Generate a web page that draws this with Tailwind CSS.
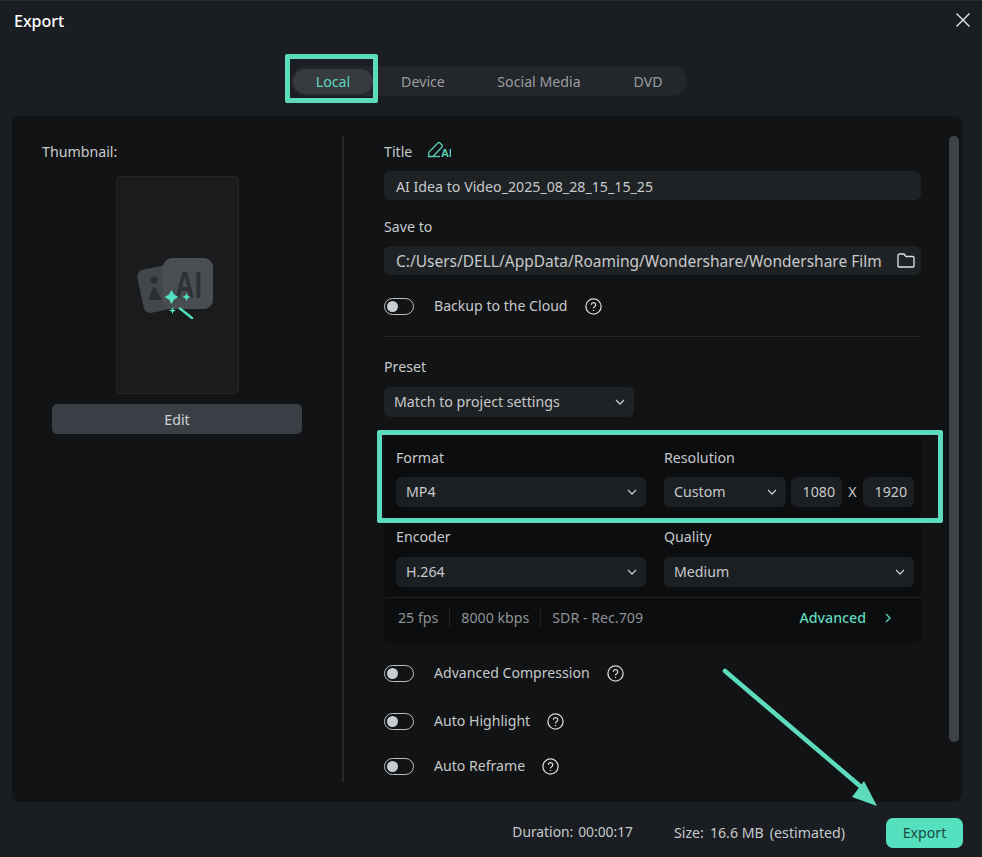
<!DOCTYPE html>
<html lang="en">
<head>
  <meta charset="UTF-8" />
  <title>Export</title>
  <script src="https://cdn.jsdelivr.net/npm/@tailwindcss/browser@4"></script>
</head>
<body class="bg-[#1a1d21] font-['Noto_Sans',sans-serif] text-[14.2px] text-[#c6c9cb]">
  <div class="relative w-[982px] h-[857px] overflow-hidden flex flex-col border-t border-[#2a2d33]">

    <!-- header -->
    <div class="h-[41px] pl-[14px] pr-[11px] pb-[3px] flex items-center justify-between shrink-0">
      <span class="text-[16px] font-medium text-white pt-[2px]">Export</span>
      <svg class="w-[16px] h-[16px]" viewBox="0 0 16 16" fill="none" stroke="#e6e8ea" stroke-width="1.4"><path d="M1.5 1.5l13 13M14.5 1.5l-13 13"/></svg>
    </div>

    <!-- tabs -->
    <div class="h-[74px] pt-[24px] flex justify-center shrink-0">
      <div class="w-[396px] h-[30px] ml-[-4px] rounded-full bg-[#23262a] flex items-center text-[#9a9da0]">
        <div class="w-[80px] h-[25px] ml-[2px] pt-[2px] rounded-full bg-[#373b40] flex items-center justify-center text-[#5fd8bc]">Local</div>
        <div class="w-[100px] pt-[2px] text-center">Device</div>
        <div class="w-[132px] pt-[2px] text-center">Social Media</div>
        <div class="w-[82px] pl-[4px] pt-[2px] text-center">DVD</div>
      </div>
    </div>

    <!-- panel -->
    <div class="mx-[12px] w-[950px] h-[686px] rounded-[8px] bg-[#111314] flex shrink-0">
      <div class="w-[330px] pt-[26px] flex flex-col items-center shrink-0">
        <div class="w-full pl-[30px] leading-[20px] text-[#c9cbcd]">Thumbnail:</div>
        <div class="mt-[14px] w-[123px] h-[218px] rounded-[4px] bg-[#1a1b1c] border border-[#222426] flex items-center justify-center">
          <svg class="w-[80px] h-[70px] mt-[-2px]" viewBox="0 0 80 70">
            <rect x="3" y="17" width="46" height="44" rx="7" fill="#43474b" transform="rotate(-12 26 39)"/>
            <circle cx="17" cy="31" r="3.5" fill="#2c2f32"/>
            <path d="M11 51l6-14 8 14z" fill="#2c2f32"/>
            <rect x="26" y="9" width="50" height="51" rx="9" fill="#4a4e52"/>
            <text x="38" y="49" font-size="37" font-weight="700" font-family="Liberation Sans" fill="#2e3235" textLength="27" lengthAdjust="spacingAndGlyphs">AI</text>
            <path d="M34.500 41l2.500 4.500 4.500 2.500-4.500 2.500-2.500 4.500-2.500-4.500-4.500-2.500 4.500-2.500z" fill="#4fe3c4"/>
            <path d="M49.500 44l1.200 2.800 2.800 1.200-2.800 1.200-1.200 2.800-1.200-2.800-2.800-1.200 2.800-1.200z" fill="#4fe3c4"/>
            <path d="M35.500 58l.9 2.600 2.600.9-2.600.9-.9 2.600-.9-2.600-2.600-.9 2.600-.9z" fill="#4fe3c4"/>
            <path d="M43 59.500L55 69" stroke="#4fe3c4" stroke-width="2.400" stroke-linecap="round"/>
          </svg>
        </div>
        <div class="mt-[10px] w-[250px] h-[30px] pt-[2px] rounded-[5px] bg-[#3a3f45] flex items-center justify-center text-[#d0d2d4]">Edit</div>
      </div>

      <div class="w-[2px] h-[646px] mt-[20px] bg-[#25282b] shrink-0"></div>

      <div class="w-[537px] ml-[40px] pt-[25px] shrink-0">
        <div class="h-[20px] flex items-center gap-[15px]">
          <span class="pt-[2px]">Title</span>
          <svg class="w-[24px] h-[18px] mt-[-2px]" viewBox="0 0 24 18" fill="none" stroke="#5bd0b0" stroke-width="1.300">
            <path d="M1.500 15.500L2 11l9-9q1-1 2 0l2 2q1 1 0 2l-9 9.500z"/>
            <path d="M6 15.500H13"/>
            <text x="14" y="16" font-size="11" font-weight="700" font-family="Liberation Sans" fill="#5bd0b0" stroke="none">AI</text>
          </svg>
        </div>
        <div class="mt-[10px] h-[29px] rounded-[6px] bg-[#1f2224] px-[12px] pt-[2px] flex items-center">AI Idea to Video_2025_08_28_15_15_25</div>
        <div class="mt-[17px] h-[20px] leading-[20px]">Save to</div>
        <div class="mt-[9px] h-[29px] rounded-[6px] bg-[#1f2224] pl-[12px] pr-[6px] flex items-center justify-between">
          <span class="whitespace-nowrap text-[15.500px] pt-[2px]">C:/Users/DELL/AppData/Roaming/Wondershare/Wondershare Film</span>
          <svg class="w-[18px] h-[15px] shrink-0" viewBox="0 0 18 15" fill="none" stroke="#e0e2e4" stroke-width="1.300"><path d="M1 13V2.500Q1 1 2.500 1H7l2 2.500h6.500Q17 3.500 17 5v8q0 1-1 1H2q-1 0-1-1z"/></svg>
        </div>
        <div class="mt-[21px] h-[20px] flex items-center">
          <div class="w-[30px] h-[17px] rounded-full border border-[#bfc2c4] flex items-center pl-[2px]"><div class="w-[11px] h-[11px] rounded-full bg-[#c8cccf]"></div></div>
          <span class="ml-[20px] text-[14.100px]">Backup to the Cloud</span>
          <svg class="ml-[17px] w-[17px] h-[17px]" viewBox="0 0 17 17" fill="none" stroke="#d4d6d8" stroke-width="1.300"><circle cx="8.500" cy="8.500" r="7.600"/><path d="M6.300 6.800a2.200 2.200 0 1 1 3.300 1.900c-.8.500-1.100.9-1.100 1.700"/><path d="M8.500 12v1"/></svg>
        </div>
        <div class="mt-[20px] h-px bg-[#25282b]"></div>
        <div class="mt-[20px] h-[20px] leading-[20px]">Preset</div>
        <div class="mt-[10px] w-[250px] h-[30px] rounded-[6px] bg-[#1f2224] pl-[10px] pr-[9px] flex items-center justify-between">
          <span>Match to project settings</span>
          <svg class="w-[10px] h-[6px]" viewBox="0 0 10 6" fill="none" stroke="#c6c9cb" stroke-width="1.300"><path d="M1 1l4 4 4-4"/></svg>
        </div>

        <!-- format box -->
        <div class="mt-[14px] h-[212px] rounded-[6px] bg-[#0b0d0f] pl-[12px] pr-[8px] pt-[17px]">
          <div class="grid grid-cols-[250px_250px] gap-x-[18px]">
            <div>
              <div class="h-[20px] leading-[20px]">Format</div>
              <div class="mt-[9px] h-[30px] rounded-[6px] bg-[#1c1f22] pl-[10px] pr-[9px] flex items-center justify-between">
                <span>MP4</span>
                <svg class="w-[10px] h-[6px]" viewBox="0 0 10 6" fill="none" stroke="#c6c9cb" stroke-width="1.300"><path d="M1 1l4 4 4-4"/></svg>
              </div>
            </div>
            <div>
              <div class="h-[20px] leading-[20px]">Resolution</div>
              <div class="mt-[9px] flex items-center">
                <div class="w-[122px] h-[30px] rounded-[6px] bg-[#1c1f22] pl-[10px] pr-[9px] flex items-center justify-between">
                  <span>Custom</span>
                  <svg class="w-[10px] h-[6px]" viewBox="0 0 10 6" fill="none" stroke="#c6c9cb" stroke-width="1.300"><path d="M1 1l4 4 4-4"/></svg>
                </div>
                <div class="ml-[5px] w-[51px] h-[30px] rounded-[6px] bg-[#1c1f22] pr-[7px] flex items-center justify-end">1080</div>
                <div class="w-[21px] text-center">X</div>
                <div class="w-[51px] h-[30px] rounded-[6px] bg-[#1c1f22] pr-[7px] flex items-center justify-end">1920</div>
              </div>
            </div>
            <div class="mt-[20px]">
              <div class="h-[20px] leading-[20px]">Encoder</div>
              <div class="mt-[10px] h-[30px] rounded-[6px] bg-[#1c1f22] pl-[10px] pr-[9px] flex items-center justify-between">
                <span>H.264</span>
                <svg class="w-[10px] h-[6px]" viewBox="0 0 10 6" fill="none" stroke="#c6c9cb" stroke-width="1.300"><path d="M1 1l4 4 4-4"/></svg>
              </div>
            </div>
            <div class="mt-[20px]">
              <div class="h-[20px] leading-[20px]">Quality</div>
              <div class="mt-[10px] h-[30px] rounded-[6px] bg-[#1c1f22] pl-[10px] pr-[9px] flex items-center justify-between">
                <span>Medium</span>
                <svg class="w-[10px] h-[6px]" viewBox="0 0 10 6" fill="none" stroke="#c6c9cb" stroke-width="1.300"><path d="M1 1l4 4 4-4"/></svg>
              </div>
            </div>
          </div>
          <div class="mt-[10px] ml-[-10px] mr-[-8px] h-[40px] border-t border-[#1f2225] pl-[12px] pr-[30px] flex items-center text-[#8f9295]">
            <span>25 fps</span>
            <span class="mx-[11px] w-px h-[20px] bg-[#1f2225]"></span>
            <span>8000 kbps</span>
            <span class="mx-[11px] w-px h-[20px] bg-[#1f2225]"></span>
            <span>SDR - Rec.709</span>
            <span class="ml-auto font-medium text-[#5fd8bc]">Advanced</span>
            <svg class="ml-[19px] w-[6px] h-[10px]" viewBox="0 0 6 10" fill="none" stroke="#5fd8bc" stroke-width="1.300"><path d="M1 1l4 4-4 4"/></svg>
          </div>
        </div>

        <!-- toggles -->
        <div class="mt-[20px] h-[20px] flex items-center">
          <div class="w-[30px] h-[17px] rounded-full border border-[#bfc2c4] flex items-center pl-[2px]"><div class="w-[11px] h-[11px] rounded-full bg-[#c8cccf]"></div></div>
          <span class="ml-[20px] text-[14.100px]">Advanced Compression</span>
          <svg class="ml-[17px] w-[17px] h-[17px]" viewBox="0 0 17 17" fill="none" stroke="#d4d6d8" stroke-width="1.300"><circle cx="8.500" cy="8.500" r="7.600"/><path d="M6.300 6.800a2.200 2.200 0 1 1 3.300 1.900c-.8.500-1.100.9-1.100 1.700"/><path d="M8.500 12v1"/></svg>
        </div>
        <div class="mt-[28px] h-[20px] flex items-center">
          <div class="w-[30px] h-[17px] rounded-full border border-[#bfc2c4] flex items-center pl-[2px]"><div class="w-[11px] h-[11px] rounded-full bg-[#c8cccf]"></div></div>
          <span class="ml-[20px] text-[14.100px]">Auto Highlight</span>
          <svg class="ml-[17px] w-[17px] h-[17px]" viewBox="0 0 17 17" fill="none" stroke="#d4d6d8" stroke-width="1.300"><circle cx="8.500" cy="8.500" r="7.600"/><path d="M6.300 6.800a2.200 2.200 0 1 1 3.300 1.900c-.8.500-1.100.9-1.100 1.700"/><path d="M8.500 12v1"/></svg>
        </div>
        <div class="mt-[25px] h-[20px] flex items-center">
          <div class="w-[30px] h-[17px] rounded-full border border-[#bfc2c4] flex items-center pl-[2px]"><div class="w-[11px] h-[11px] rounded-full bg-[#c8cccf]"></div></div>
          <span class="ml-[20px] text-[14.100px]">Auto Reframe</span>
          <svg class="ml-[17px] w-[17px] h-[17px]" viewBox="0 0 17 17" fill="none" stroke="#d4d6d8" stroke-width="1.300"><circle cx="8.500" cy="8.500" r="7.600"/><path d="M6.300 6.800a2.200 2.200 0 1 1 3.300 1.900c-.8.500-1.100.9-1.100 1.700"/><path d="M8.500 12v1"/></svg>
        </div>
      </div>

      <!-- scrollbar -->
      <div class="ml-[28px] mt-[20px] w-[10px] h-[606px] rounded-full bg-[#3f4349] shrink-0"></div>
    </div>

    <!-- footer -->
    <div class="flex-1 flex items-center justify-end pr-[19px] pt-[6px]">
      <span class="flex gap-[5px] text-[13.800px]"><span>Duration:</span><span>00:00:17</span></span>
      <span class="ml-[41px] flex gap-[6px]"><span>Size:</span><span>16.6 MB</span><span>(estimated)</span></span>
      <div class="ml-[41px] w-[77px] h-[30px] rounded-[7px] bg-[#55e0c0] flex items-center justify-center text-[#1f4a42]">Export</div>
    </div>

    <!-- annotations drawn over the dialog -->
    <div class="absolute left-[285px] top-[53px] w-[93px] h-[49px] border-[5px] border-[#5ddcbd] rounded-[2px]"></div>
    <div class="absolute left-[377px] top-[429px] w-[566px] h-[93px] border-[5px] border-[#5ddcbd] rounded-[2px]"></div>
    <svg class="absolute left-[715px] top-[660px] w-[175px] h-[150px]" viewBox="0 0 175 150" fill="none">
      <path d="M10 10L145 125" stroke="#5ddcbd" stroke-width="4.500" stroke-linecap="round"/>
      <path d="M162 145L137 136 149 120z" fill="#5ddcbd"/>
    </svg>
  </div>
</body>
</html>
